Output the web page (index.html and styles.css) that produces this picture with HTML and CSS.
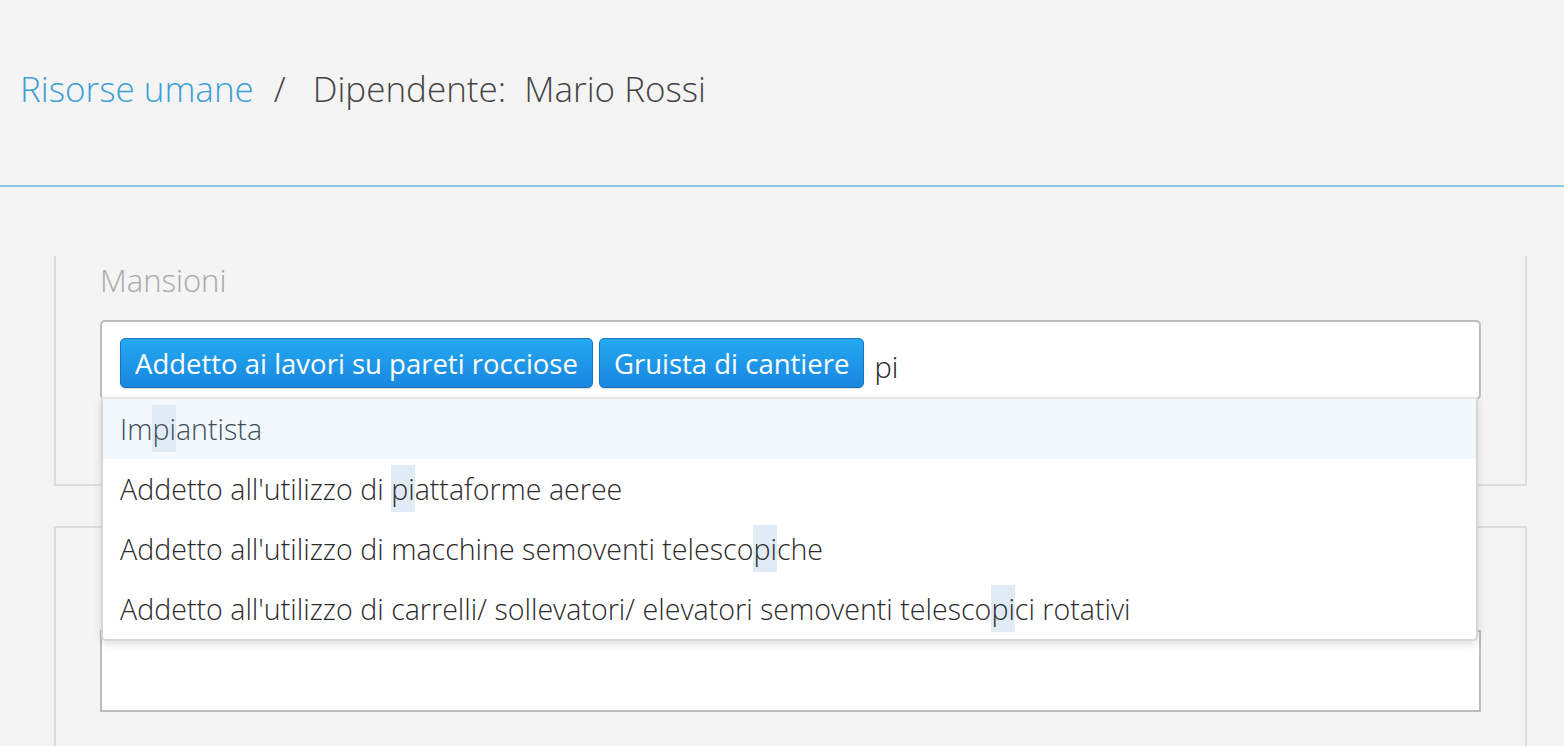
FILE: index.html
```html
<!DOCTYPE html>
<html lang="it">
<head>
<meta charset="utf-8">
<title>Dipendente: Mario Rossi</title>
<link rel="stylesheet" href="styles.css">
</head>
<body>
<header class="page-header">
  <nav class="breadcrumb">
    <a class="crumb-link" href="#">Risorse umane</a>
    <span class="crumb-sep">/</span>
    <span class="crumb-current">Dipendente:&nbsp; Mario Rossi</span>
  </nav>
</header>
<main class="content">
  <section class="panel panel-first">
    <label class="field-label">Mansioni</label>
    <div class="select-wrap">
      <div class="select-box">
        <span class="tag">Addetto ai lavori su pareti rocciose</span>
        <span class="tag">Gruista di cantiere</span>
        <span class="typed">pi</span>
      </div>
      <ul class="dropdown">
        <li class="option active">Im<mark>pi</mark>antista</li>
        <li class="option">Addetto all'utilizzo di <mark>pi</mark>attaforme aeree</li>
        <li class="option">Addetto all'utilizzo di macchine semoventi telesco<mark>pi</mark>che</li>
        <li class="option">Addetto all'utilizzo di carrelli/ sollevatori/ elevatori semoventi telesco<mark>pi</mark>ci rotativi</li>
      </ul>
    </div>
  </section>
  <section class="panel panel-second">
    <div class="text-box"></div>
  </section>
</main>
</body>
</html>
```

FILE: styles.css
```css
html, body {
  margin: 0;
  padding: 0;
}
body {
  background: #f4f4f4;
  font-family: "Open Sans", "Liberation Sans", sans-serif;
  color: #333;
  height: 746px;
  overflow: hidden;
}
.page-header {
  box-sizing: border-box;
  height: 187px;
  border-bottom: 2px solid #8fc8e1;
  display: flex;
  align-items: flex-start;
}
.breadcrumb {
  margin-top: 66px;
  padding-left: 20px;
  font-size: 35px;
  font-weight: 300;
  line-height: 46px;
  display: flex;
  align-items: baseline;
}
.crumb-link {
  color: #3a9fd5;
  text-decoration: none;
}
.crumb-sep {
  color: #444;
  margin: 0 27px 0 20px;
}
.crumb-current {
  color: #444;
}
.content {
  padding: 0 37px 0 54px;
}
.panel {
  border: 2px solid #dcdcdc;
  box-sizing: border-box;
}
.panel-first {
  margin-top: 69px;
  border-top: none;
  height: 230px;
  padding: 6px 44px 0 44px;
}
.panel-second {
  margin-top: 40px;
  height: 260px;
  padding: 102px 44px 0 44px;
}
.field-label {
  display: block;
  color: #a8a8a8;
  font-size: 31px;
  font-weight: 300;
  line-height: 36px;
  margin-bottom: 22px;
}
.select-wrap {
  position: relative;
}
.select-box {
  background: #fff;
  border: 2px solid #bcbcbc;
  border-radius: 5px;
  height: 80px;
  box-sizing: border-box;
  padding: 16px 18px 0;
  display: flex;
  align-items: flex-start;
  gap: 6px;
}
.tag {
  display: inline-flex;
  align-items: center;
  height: 50px;
  box-sizing: border-box;
  padding: 0 14px;
  background: linear-gradient(#25a9f0, #1886e0);
  border: 1px solid #1673bd;
  border-radius: 5px;
  color: #fff;
  font-size: 27.5px;
  box-shadow: 0 1px 1px rgba(0,0,0,0.15);
}
.typed {
  font-size: 29px;
  font-weight: 300;
  line-height: 50px;
  color: #222;
  margin-left: 4px;
  padding-top: 4px;
}
.dropdown {
  position: absolute;
  top: 77px;
  left: 1px;
  right: 3px;
  margin: 0;
  padding: 0;
  list-style: none;
  background: #fff;
  border: 2px solid #d6d6d6;
  border-top: 2px solid #e6e6e6;
  border-radius: 0 0 5px 5px;
  box-shadow: 0 3px 8px rgba(0,0,0,0.12);
  z-index: 5;
}
.option {
  height: 60px;
  line-height: 60px;
  padding-left: 17px;
  font-size: 28.6px;
  font-weight: 300;
  color: #2b2b2b;
  white-space: nowrap;
}
.option.active {
  background: #f3f8fc;
  color: #3c4d5c;
}
mark {
  background: #e1ebf6;
  color: inherit;
  padding: 4px 0;
}
.text-box {
  background: #fff;
  border: 2px solid #bcbcbc;
  height: 82px;
  box-sizing: border-box;
}
```
